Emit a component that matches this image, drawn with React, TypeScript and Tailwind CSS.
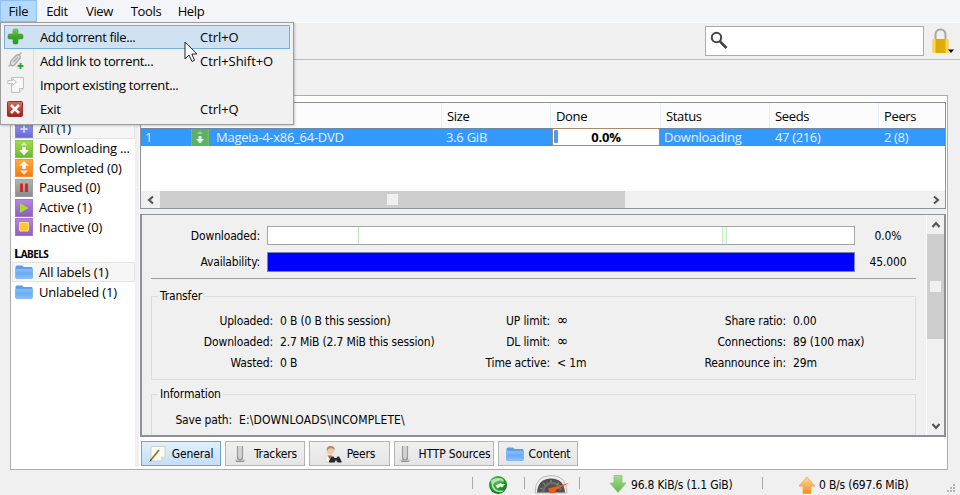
import type { ReactNode } from "react"

type IconKind = "all" | "down" | "up" | "pause" | "play" | "stop"

const FILTERS: { kind: IconKind; label: string }[] = [
  { kind: "all",   label: "All (1)" },
  { kind: "down",  label: "Downloading ..." },
  { kind: "up",    label: "Completed (0)" },
  { kind: "pause", label: "Paused (0)" },
  { kind: "play",  label: "Active (1)" },
  { kind: "stop",  label: "Inactive (0)" },
]

const TILE_COLORS: Record<IconKind, [string, string]> = {
  all:   ["#9d9bf0", "#6a69d4"],
  down:  ["#a5dd4c", "#6cb82a"],
  up:    ["#ffac40", "#f47a0c"],
  pause: ["#b4b4b4", "#8c8c8c"],
  play:  ["#b588d8", "#925abf"],
  stop:  ["#b588d8", "#925abf"],
}

function StateIcon({ kind }: { kind: IconKind }) {
  const [light, dark] = TILE_COLORS[kind]
  return (
    <svg width="18" height="18" viewBox="0 0 18 18" className="shrink-0">
      <defs>
        <linearGradient id={`tile-${kind}`} x1="0" y1="0" x2="0" y2="1">
          <stop offset="0" stopColor={light} />
          <stop offset="1" stopColor={dark} />
        </linearGradient>
      </defs>
      <rect x="0.5" y="0.5" width="17" height="17" fill={`url(#tile-${kind})`} stroke={dark} strokeOpacity="0.7" />
      {kind === "all" && <path d="M9 5.5v7M5.500 9h7" stroke="#c3d6ff" strokeWidth="2" />}
      {kind === "down" && (
        <>
          <path d="M9 2l3.500 3.500h-7z" fill="#fff" opacity="0.6" />
          <path d="M7.2 7h3.6v3h3.200L9 15.200 4 10h3.200z" fill="#fff" />
        </>
      )}
      {kind === "up" && (
        <>
          <path d="M9 2l4.800 4.800h-3v3.200H7.2V6.800h-3z" fill="#fff" opacity="0.9" />
          <path d="M4.800 11.500h8.400L9 15.800z" fill="#fff" opacity="0.8" />
        </>
      )}
      {kind === "pause" && <path d="M5 4.500h3v8.500H5zM10 4.500h3v8.500h-3z" fill="#cf2b2b" />}
      {kind === "play" && <path d="M5 4l8.500 5L5 14z" fill="#9ee02c" />}
      {kind === "stop" && <rect x="4.500" y="4.500" width="9" height="8.500" rx="0.5" fill="#ffc62a" stroke="#ffe27a" />}
    </svg>
  )
}

function FolderIcon() {
  return (
    <svg width="18" height="14" viewBox="0 0 18 14" className="shrink-0">
      <defs>
        <linearGradient id="folder" x1="0" y1="0" x2="0" y2="1">
          <stop offset="0" stopColor="#8cbdf8" />
          <stop offset="0.5" stopColor="#6aaaf5" />
          <stop offset="1" stopColor="#8dc2fb" />
        </linearGradient>
      </defs>
      <path d="M0.5 2q0-1.5 1.5-1.5h5L8.5 2h8q1 0 1 1v9q0 1.5-1.5 1.5H2q-1.5 0-1.5-1.5z" fill="#5b9ee8" />
      <path d="M0.5 4h17v8.5q0 1-1 1h-15q-1 0-1-1z" fill="url(#folder)" stroke="#78aef0" strokeWidth="0.5" />
    </svg>
  )
}

function PlusIcon() {
  return (
    <svg width="18" height="18" viewBox="0 0 18 18">
      <defs>
        <linearGradient id="plus" x1="0" y1="0" x2="0" y2="1">
          <stop offset="0" stopColor="#7bcf58" />
          <stop offset="0.5" stopColor="#3fa52c" />
          <stop offset="1" stopColor="#2b961f" />
        </linearGradient>
      </defs>
      <path
        d="M6 2.500q0-1.500 1.500-1.500h2Q11 1 11 2.500V6h3.500Q16 6 16 7.500v2q0 1.500-1.500 1.500H11v3.500q0 1.500-1.500 1.500h-2Q6 16 6 14.500V11H2.500Q1 11 1 9.500v-2Q1 6 2.500 6H6z"
        fill="url(#plus)" stroke="#3d9a32" strokeWidth="0.6"
      />
    </svg>
  )
}

function LinkIcon() {
  return (
    <svg width="18" height="18" viewBox="0 0 18 18" fill="none">
      <g stroke="#a9a9a9" strokeWidth="1.3">
        <path d="M4 9l5-5.500q2-1.500 3.500 0t0 3.500l-5 6q-2 1.500-3.500 0T4 9z" fill="#dedede" />
        <path d="M6.500 10l4.500-5M12 3l2.500-2.500M1.500 14.500L4 12.500" />
      </g>
      <path d="M13.500 11v6M10.500 14h6" stroke="#36a336" strokeWidth="2" />
    </svg>
  )
}

function ImportIcon() {
  return (
    <svg width="18" height="18" viewBox="0 0 18 18" fill="none">
      <path d="M4.500 1.500h12v11l-4 4h-8z" fill="#f7f7f7" stroke="#c0c0c0" />
      <path d="M12.500 16.500v-4h4" stroke="#c0c0c0" fill="#e6e6e6" />
      <path d="M.8 4.500h5V2.800L9.300 6 5.800 9.200V7.500h-5z" fill="#fafafa" stroke="#b9b9b9" strokeWidth="0.9" />
    </svg>
  )
}

function ExitIcon() {
  return (
    <svg width="16" height="16" viewBox="0 0 16 16">
      <defs>
        <linearGradient id="exit" x1="0" y1="0" x2="0" y2="1">
          <stop offset="0" stopColor="#d0705f" />
          <stop offset="1" stopColor="#a81c1a" />
        </linearGradient>
      </defs>
      <rect x="0.5" y="0.5" width="15" height="15" rx="1" fill="url(#exit)" stroke="#96312a" />
      <path d="M4 4l8 8M12 4l-8 8" stroke="#fff" strokeWidth="2.6" />
    </svg>
  )
}

function NoteIcon() {
  return (
    <svg width="18" height="18" viewBox="0 0 18 18">
      <path d="M2 1.500h14v10l-4 4.500H2z" fill="#fbfaf5" stroke="#d0cfc8" />
      <path d="M12 16v-4.500h4z" fill="#dcdad2" />
      <path d="M1.500 15.500L10 5" stroke="#8a7a35" strokeWidth="1.8" />
      <path d="M.8 16.500l1.700-2.200" stroke="#444" strokeWidth="1" />
    </svg>
  )
}

function TrackerIcon() {
  return (
    <svg width="16" height="18" viewBox="0 0 16 18">
      <path d="M1 15q6-2.500 12 0l-2 2H4z" fill="#c9c9c9" />
      <path d="M4.500 1v11M9.500 1v11" stroke="#9c9c9c" strokeWidth="1.2" />
      <path d="M6 1v13M8 1v13" stroke="#b8b8b8" strokeWidth="1" />
      <path d="M4.500 12q0 3 2.500 3t2.500-3M3 16.500h8" fill="none" stroke="#909090" strokeWidth="1.2" />
    </svg>
  )
}

function PeersIcon() {
  return (
    <svg width="18" height="18" viewBox="0 0 18 18">
      <path d="M1 17q0-5 3-6.500h4q4 1.500 4 6.500z" fill="#f6f3ee" stroke="#d6d0c8" strokeWidth="0.6" />
      <circle cx="6.500" cy="6" r="3.600" fill="#efc9a4" />
      <path d="M2.700 6Q2.200 1 6.700 1t4 4.500q-1-2.500-4-2.200T2.700 6z" fill="#b08a64" />
      <path d="M3.500 10.500l2.500 4 2-4z" fill="#c9602e" />
      <path d="M5 16l2.500-4.500h2l1 1.500h2l1-1.500h1.500L17.500 16v1.500h-4L12 15l-1.500 2.500H5z" fill="#26282c" />
    </svg>
  )
}

function LockIcon() {
  return (
    <svg width="22" height="26" viewBox="0 0 22 26">
      <defs>
        <linearGradient id="lock" x1="0" y1="0" x2="1" y2="0">
          <stop offset="0" stopColor="#f2cc30" />
          <stop offset="0.12" stopColor="#ffe04a" />
          <stop offset="0.25" stopColor="#dfa80a" />
          <stop offset="0.75" stopColor="#e0ac0c" />
          <stop offset="0.9" stopColor="#ffe152" />
          <stop offset="1" stopColor="#eec022" />
        </linearGradient>
      </defs>
      <path d="M3.500 12V7q0-5.500 5-5.500t5 5.500v5" fill="none" stroke="#a8a8a8" strokeWidth="2" />
      <rect x="0.5" y="11" width="16" height="14" rx="1" fill="url(#lock)" />
      <path d="M16 21.500h6l-3 3.500z" fill="#000" />
    </svg>
  )
}

function GlobeIcon() {
  return (
    <svg width="20" height="20" viewBox="0 0 20 20">
      <defs>
        <radialGradient id="globe" cx="0.4" cy="0.3" r="0.7">
          <stop offset="0" stopColor="#5cc454" />
          <stop offset="0.6" stopColor="#239a2b" />
          <stop offset="1" stopColor="#0f7a1b" />
        </radialGradient>
      </defs>
      <circle cx="10" cy="10" r="9" fill="url(#globe)" />
      <path d="M3 5.500q6-4 12-1.500l1 3-4-1.500-5 1.500L5 10l2 3.500 3 2h6.500l-2.500 1.500Q6 18 4 12z" fill="#c9ecc6" opacity="0.85" />
      <path d="M7.500 10.500l6-3v1.500h3.500l-3 3.500-1.500-1-3 2z" fill="#e9f8e7" />
    </svg>
  )
}

function GaugeIcon() {
  return (
    <svg width="36" height="20" viewBox="0 0 36 20">
      <path d="M1 19Q1 1.500 17 1.500T33 19z" fill="#eeeeee" stroke="#bbb" />
      <path d="M3 18.500Q4 4.500 17 4.500t14 14z" fill="#505050" />
      <path d="M9 18q1-8 8-9t10 7" fill="none" stroke="#6c6c6c" strokeWidth="2.5" />
      <path d="M6 14l2 1M9 9l2 1.500M17 6v2M25 9l-2 1.500" stroke="#aaa" strokeWidth="0.8" />
      <path d="M14 14.500l21-5.500-13 7-1 2.500-5 1z" fill="#f0581c" />
    </svg>
  )
}

function StatusArrow({ dir }: { dir: "up" | "down" }) {
  const up = dir === "up"
  return (
    <svg width="18" height="18" viewBox="0 0 18 18">
      <defs>
        <linearGradient id={`arrow-${dir}`} x1="0" y1="0" x2="0" y2="1">
          <stop offset="0" stopColor={up ? "#ffdca6" : "#a9dc94"} />
          <stop offset="1" stopColor={up ? "#f58e10" : "#5db848"} />
        </linearGradient>
      </defs>
      <path
        d={up ? "M9 1l8 9h-4v7.500H5V10H1z" : "M5 .5h8V8h4l-8 9.500L1 8h4z"}
        fill={`url(#arrow-${dir})`}
        stroke={up ? "#eda650" : "#86c572"}
        strokeWidth="0.8"
      />
    </svg>
  )
}

function Chevron({ d }: { d: string }) {
  return (
    <svg width="10" height="10" viewBox="0 0 10 10" fill="none" stroke="#505050" strokeWidth="2">
      <path d={d} />
    </svg>
  )
}

function MenuItem({ icon, label, shortcut, active }: {
  icon: ReactNode; label: string; shortcut?: string; active?: boolean
}) {
  return (
    <div className={`flex h-6 items-center border ${active ? "border-[#78aee0] bg-[#d0e2f2]" : "border-transparent"}`}>
      <div className="flex w-[27px] justify-start pl-[2px]">{icon}</div>
      <div className="w-[168px] pl-[8px] tracking-[-0.37px]">{label}</div>
      <div className="tracking-[-0.05px]">{shortcut}</div>
    </div>
  )
}

function FileMenu() {
  return (
    <div className="absolute left-0 top-[22px] h-[103px] w-[294px] border border-[#9d9d9d] bg-[#f1f1f1] shadow-[1px_1px_2px_rgba(0,0,0,0.2)]">
      <div className="absolute left-[32px] top-[2px] h-[97px] w-px bg-[#dedede]" />
      <div className="relative flex flex-col px-[3px] pt-[2px]">
        <MenuItem icon={<PlusIcon />} label="Add torrent file..." shortcut="Ctrl+O" active />
        <MenuItem icon={<LinkIcon />} label="Add link to torrent..." shortcut="Ctrl+Shift+O" />
        <MenuItem icon={<ImportIcon />} label="Import existing torrent..." />
        <MenuItem icon={<ExitIcon />} label="Exit" shortcut="Ctrl+Q" />
      </div>
      <svg width="14" height="22" viewBox="0 0 14 22" className="absolute left-[183px] top-[18px]">
        <path d="M1 1v17l4-4 3 6.500 2.500-1.200L7.800 13H13z" fill="#fff" stroke="#222" strokeWidth="1" />
      </svg>
    </div>
  )
}

function Sidebar() {
  return (
    <div className="flex w-[123px] flex-col bg-white pt-[23px] tracking-[-0.18px]">
      {FILTERS.map((f, i) => (
        <div
          key={f.kind}
          className={`flex h-[19.7px] items-center gap-[6px] border pl-[2px] ${i === 0 ? "border-[#e4e4e4] bg-[#f6f6f6]" : "border-transparent"}`}
        >
          <StateIcon kind={f.kind} />
          <span>{f.label}</span>
        </div>
      ))}
      <div className="mt-[7px] h-[18px] pl-[2px] text-[13px] font-bold leading-[18px] tracking-[-0.6px]">
        L<span className="text-[10px]">ABELS</span>
      </div>
      <div className="flex h-5 items-center gap-[6px] border border-[#e4e4e4] bg-[#f6f6f6] pl-[2px]">
        <FolderIcon />
        <span>All labels (1)</span>
      </div>
      <div className="flex h-5 items-center gap-[6px] border border-transparent pl-[2px]">
        <FolderIcon />
        <span>Unlabeled (1)</span>
      </div>
    </div>
  )
}

function TorrentTable() {
  return (
    <div className="flex h-[107px] flex-col border border-[#8d9097] bg-white tracking-[-0.35px]">
      <div className="flex h-[25px] items-center bg-[#fcfcfc]">
        <div className="w-[300px]" />
        <div className="h-full w-[109px] border-l border-[#e8eef6] pl-[5px] leading-[27px]">Size</div>
        <div className="h-full w-[110px] border-l border-[#e8eef6] pl-[5px] leading-[27px]">Done</div>
        <div className="h-full w-[109px] border-l border-[#e8eef6] pl-[5px] leading-[27px]">Status</div>
        <div className="h-full w-[109px] border-l border-[#e8eef6] pl-[5px] leading-[27px]">Seeds</div>
        <div className="h-full flex-1 border-l border-[#e8eef6] pl-[5px] leading-[27px]">Peers</div>
      </div>
      <div className="flex h-[18px] items-center border-y border-[#6c89a8] bg-[#3399ff] text-[#e4f1ff]">
        <div className="w-[50px] pl-1">1</div>
        <div className="flex w-[252px] items-center gap-[7px]">
          <svg width="18" height="17" viewBox="0 0 18 17">
            <rect width="18" height="17" fill="#7cb84a" />
            <rect x="1" width="15.500" height="17" fill="#5fb060" />
            <path d="M9 2l3 3H6z" fill="#93d0a4" />
            <path d="M7.500 7h3v3H13l-4 4.500L5 10h2.500z" fill="#d8f0ff" />
          </svg>
          <span className="tracking-[-0.26px]">Mageia-4-x86_64-DVD</span>
        </div>
        <div className="w-[109px] pl-[3px] tracking-[-0.25px]">3.6 GiB</div>
        <div className="relative flex h-[18px] w-[108px] items-center justify-center rounded-[2px] border border-[#a58a6c] bg-white font-bold tracking-[-0.2px] text-black">
          <span className="absolute left-[1px] top-[1px] h-[13px] w-[4px] rounded-[1px] bg-[#4f9be6]" />
          0.0%
        </div>
        <div className="w-[111px] pl-1 tracking-[-0.2px]">Downloading</div>
        <div className="w-[109px] pl-[4px]">47 (216)</div>
        <div className="pl-[4px]">2 (8)</div>
      </div>
      <div className="flex-1" />
      <div className="flex h-[17px] items-center bg-[#f0f0f0]">
        <div className="flex w-[19px] justify-center"><Chevron d="M7 1.500L3 5l4 3.500" /></div>
        <div className="flex h-full w-[465px] items-center justify-center bg-[#cdcdcd]">
          <div className="h-[11px] w-[11px] bg-[#f0f0f0]" />
        </div>
        <div className="flex flex-1 justify-end pr-1"><Chevron d="M3 1.500L7 5 3 8.500" /></div>
      </div>
    </div>
  )
}

function Stat({ label, value, labelWidth = "w-[121px]", valueClass = "" }: {
  label: string; value: string; labelWidth?: string; valueClass?: string
}) {
  return (
    <div className="flex h-[21px] items-center gap-[7px] whitespace-nowrap">
      <div className={`shrink-0 text-right ${labelWidth}`}>{label}</div>
      <div className={valueClass}>{value}</div>
    </div>
  )
}

function Group({ title, className, children }: { title: string; className: string; children: ReactNode }) {
  return (
    <fieldset className={`shrink-0 border border-[#dcdcdc] ${className}`}>
      <legend className="ml-[6px] px-[2px] leading-[14px]">{title}</legend>
      {children}
    </fieldset>
  )
}

function DetailPanel() {
  return (
    <div className="flex h-[223px] overflow-hidden border-2 border-t border-[#8d9097] bg-[#f0f0f0] font-['DejaVu_Sans_Condensed','Liberation_Sans',sans-serif] text-[12px] tracking-[-0.15px]">
      <div className="flex w-[784px] flex-col pl-[9px] pr-[10px] pt-[11px]">
        <div className="flex h-[19px] shrink-0 items-center">
          <div className="w-[109px] shrink-0 text-right">Downloaded:</div>
          <div className="relative ml-[7px] h-[19px] w-[588px] shrink-0 border border-[#a5a5a5] bg-white">
            <span className="absolute left-[90px] top-0 h-full w-px bg-[#b9e8b9]" />
            <span className="absolute left-[454px] top-0 h-full w-[5px] border-x border-[#c6ecc6] bg-[#eef9ee]" />
          </div>
          <div className="w-[61px] pl-[5px] text-center">0.0%</div>
        </div>
        <div className="mt-[7px] flex h-[20px] shrink-0 items-center">
          <div className="w-[109px] shrink-0 text-right">Availability:</div>
          <div className="ml-[7px] h-[20px] w-[588px] shrink-0 border border-[#7c84c0] bg-[#0000ff]" />
          <div className="w-[61px] pl-[5px] text-center">45.000</div>
        </div>
        <div className="mt-[6px] h-px shrink-0 bg-[#a0a0a0]" />
        <Group title="Transfer" className="mt-[10px] h-[91px]">
          <div className="flex pt-[7px]">
            <div className="w-[277px]">
              <Stat label="Uploaded:" value="0 B (0 B this session)" />
              <Stat label="Downloaded:" value="2.7 MiB (2.7 MiB this session)" />
              <Stat label="Wasted:" value="0 B" />
            </div>
            <div className="w-[236px]">
              <Stat label="UP limit:" value="∞" valueClass="text-[15px]" />
              <Stat label="DL limit:" value="∞" valueClass="text-[15px]" />
              <Stat label="Time active:" value="< 1m" />
            </div>
            <div>
              <Stat label="Share ratio:" value="0.00" />
              <Stat label="Connections:" value="89 (100 max)" />
              <Stat label="Reannounce in:" value="29m" />
            </div>
          </div>
        </Group>
        <Group title="Information" className="mt-[7px] h-[70px]">
          <div className="pt-[8px]">
            <Stat labelWidth="w-[80px]" label="Save path:" value="E:\DOWNLOADS\INCOMPLETE\" valueClass="tracking-[0.13px]" />
          </div>
        </Group>
      </div>
      <div className="flex flex-1 flex-col items-center border-l border-white bg-[#f0f0f0]">
        <div className="flex h-[19px] items-center"><Chevron d="M1.500 7L5 3l3.500 4" /></div>
        <div className="flex h-[105px] w-full items-center justify-center bg-[#cdcdcd]">
          <div className="h-[11px] w-[11px] bg-[#f0f0f0]" />
        </div>
        <div className="flex-1" />
        <div className="flex h-[19px] items-center"><Chevron d="M1.500 3L5 7l3.500-4" /></div>
      </div>
    </div>
  )
}

function TabButton({ icon, label, width, active }: {
  icon: ReactNode; label: string; width: string; active?: boolean
}) {
  return (
    <button
      className={`flex h-[25px] items-center justify-center gap-[5px] whitespace-nowrap border ${width} ${
        active
          ? "border-[#68a5dc] bg-linear-to-b from-[#e3f0fc] to-[#c2defa]"
          : "border-[#b4b4b4] bg-linear-to-b from-[#f0f0f0] to-[#e5e5e5]"
      }`}
    >
      {icon}
      <span>{label}</span>
    </button>
  )
}

function StatusBar() {
  return (
    <div className="flex h-[25px] items-center pt-px font-['DejaVu_Sans_Condensed','Liberation_Sans',sans-serif] text-[12px] tracking-[-0.2px]">
      <div className="ml-[472px] h-[12px] w-px bg-[#a8a8a8]" />
      <div className="ml-[15px] pt-[3px]"><GlobeIcon /></div>
      <div className="ml-[16px] h-[12px] w-px bg-[#a8a8a8]" />
      <div className="ml-[9px] pt-px"><GaugeIcon /></div>
      <div className="ml-[9px] h-[12px] w-px bg-[#a8a8a8]" />
      <div className="ml-[29px] pt-px"><StatusArrow dir="down" /></div>
      <div className="w-[134px] whitespace-nowrap pl-[4px] pt-[4px]">96.8 KiB/s (1.1 GiB)</div>
      <div className="ml-px h-[12px] w-px bg-[#a8a8a8]" />
      <div className="ml-[35px] pt-[4px]"><StatusArrow dir="up" /></div>
      <div className="w-[100px] whitespace-nowrap pl-[3px] pt-[4px]">0 B/s (697.6 MiB)</div>
      <svg width="9" height="9" viewBox="0 0 9 9" fill="#b5b5b5" className="ml-auto mr-[4px] mt-[10px]">
        <path d="M6 0h2v2H6zM3 3h2v2H3zM6 3h2v2H6zM0 6h2v2H0zM3 6h2v2H3zM6 6h2v2H6z" />
      </svg>
    </div>
  )
}

export default function App() {
  return (
    <div className="relative flex h-[495px] w-[960px] flex-col overflow-hidden bg-[#f0f0f0] font-['Open_Sans','Noto_Sans',sans-serif] text-[13px] leading-none text-black">
      <div className="flex h-[23px] border-b border-[#fbfbfb] bg-[#f4f5f9] tracking-[-0.35px]">
        <div className="flex h-[22px] w-[37px] items-center justify-center border border-[#8cc0f2] bg-[#b5d9fb] tracking-[-0.2px]">File</div>
        <div className="flex h-[22px] w-[40px] items-center justify-center">Edit</div>
        <div className="flex h-[22px] w-[45px] items-center justify-center">View</div>
        <div className="flex h-[22px] w-[48px] items-center justify-center">Tools</div>
        <div className="flex h-[22px] w-[42px] items-center justify-center">Help</div>
      </div>
      <div className="flex h-[37px] items-start justify-end border-b border-[#bcbcbc] pr-[6px] pt-[3px]">
        <div className="flex h-[30px] w-[219px] border border-[#ababab] bg-white pl-[4px] pt-[4px]">
          <svg width="18" height="19" viewBox="0 0 18 19" fill="none" stroke="#454545">
            <circle cx="6.500" cy="6.500" r="4.700" strokeWidth="2" />
            <path d="M10 10.500l6.500 6.500" strokeWidth="2.600" />
          </svg>
        </div>
        <div className="ml-[8px] pt-[2px]"><LockIcon /></div>
      </div>
      <div className="ml-[10px] mt-[35px] flex h-[375px] w-[938px] border border-[#adadad] bg-white pl-px">
        <Sidebar />
        <div className="mb-[2px] mr-[1px] w-[4px] bg-[#f0f0f0]" />
        <div className="flex w-[806px] flex-col pt-[6px]">
          <TorrentTable />
          <div className="h-[5px] bg-[#f0f0f0]" />
          <DetailPanel />
          <div className="flex gap-[4px] pl-px pt-[4px] font-['DejaVu_Sans_Condensed','Liberation_Sans',sans-serif] text-[12px] tracking-[-0.15px]">
            <TabButton width="w-[80px]" icon={<NoteIcon />} label="General" active />
            <TabButton width="w-[80px]" icon={<TrackerIcon />} label="Trackers" />
            <TabButton width="w-[81px]" icon={<PeersIcon />} label="Peers" />
            <TabButton width="w-[100px]" icon={<TrackerIcon />} label="HTTP Sources" />
            <TabButton width="w-[80px]" icon={<FolderIcon />} label="Content" />
          </div>
        </div>
      </div>
      <StatusBar />
      <FileMenu />
    </div>
  )
}
